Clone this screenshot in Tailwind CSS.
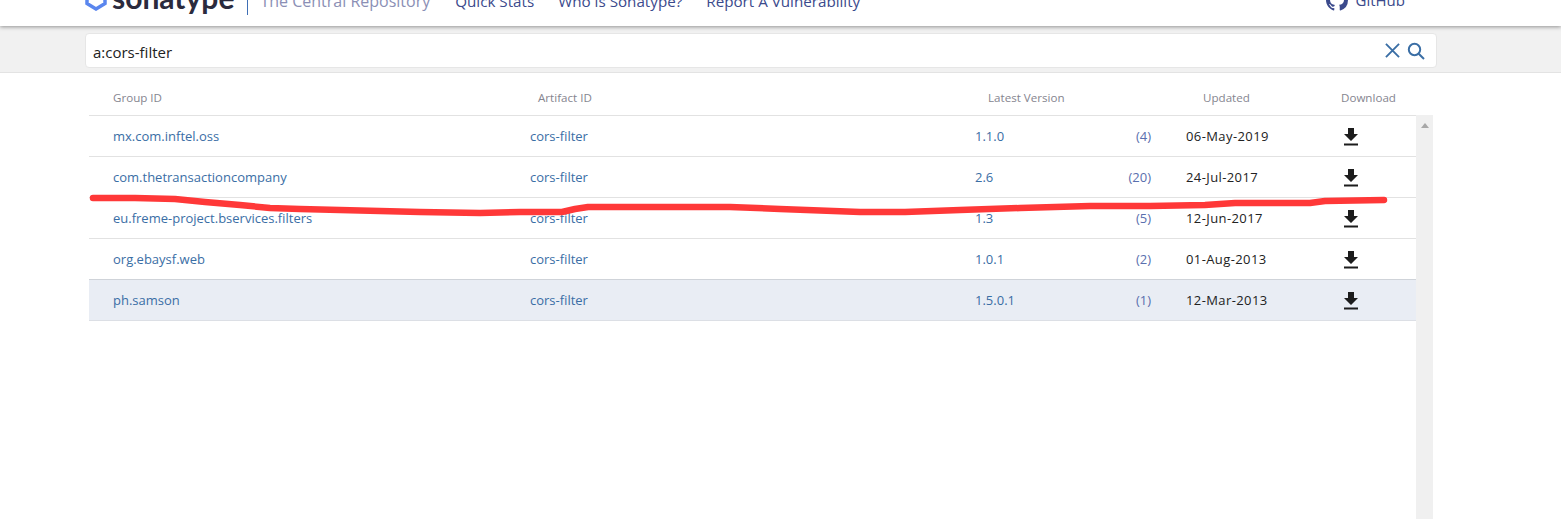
<!DOCTYPE html>
<html lang="en">
<head>
  <meta charset="UTF-8" />
  <title>The Central Repository</title>
  <script src="https://cdn.jsdelivr.net/npm/@tailwindcss/browser@4"></script>
</head>
<body class="relative h-[519px] overflow-hidden bg-white font-['Open_Sans',sans-serif] text-[13px]">

  <!-- header, scrolled partly out of view -->
  <header class="relative z-10 h-[26px] overflow-hidden bg-white shadow-[0_1px_4px_rgba(0,0,0,0.4)]">
    <div class="flex h-[26px] items-end pl-[85px] pr-[156px]">
      <svg class="mb-[15px] h-[26px] w-[22px] shrink-0" viewBox="0 0 22 26">
        <path d="M11 2 L20 7.5 V18.5 L11 24 L2 18.5 V7.5 Z" fill="none" stroke="#5a86ee" stroke-width="3.5" />
      </svg>
      <span class="mb-[14px] ml-[5px] text-[30px] leading-[30px] font-bold text-[#2b2b3d] font-['Lato',sans-serif]">sonatype</span>
      <span class="mb-[11px] ml-[13px] h-[30px] w-px shrink-0 bg-[#3f6fb5]"></span>
      <span class="mb-[15px] ml-[12px] text-[16px] leading-[20px] text-[#8b8fb5]">The Central Repository</span>
      <nav class="mb-[15px] ml-[25px] flex gap-[24px] text-[15.2px] leading-[20px] text-[#3b4a8c]">
        <span>Quick Stats</span>
        <span>Who is Sonatype?</span>
        <span>Report A Vulnerability</span>
      </nav>
      <div class="mb-[15px] ml-auto flex items-center gap-[8px] text-[15px] leading-[20px] text-[#3b4a8c]">
        <svg class="h-[22px] w-[22px]" viewBox="0 0 16 16" fill="#3b4a8c">
          <path d="M8 0C3.58 0 0 3.58 0 8c0 3.54 2.29 6.53 5.47 7.59.4.07.55-.17.55-.38v-1.34c-2.23.48-2.7-1.07-2.7-1.07-.36-.92-.89-1.17-.89-1.17-.73-.5.05-.49.05-.49.8.06 1.23.83 1.23.83.71 1.22 1.87.87 2.33.66.07-.52.28-.87.51-1.07-1.78-.2-3.64-.89-3.64-3.95 0-.87.31-1.59.82-2.15-.08-.2-.36-1.02.08-2.12 0 0 .67-.21 2.2.82A7.7 7.7 0 0 1 8 3.87c.68 0 1.36.09 2 .27 1.53-1.04 2.2-.82 2.2-.82.44 1.1.16 1.92.08 2.12.51.56.82 1.27.82 2.15 0 3.07-1.87 3.75-3.65 3.95.29.25.54.73.54 1.48v2.19c0 .21.15.46.55.38A8 8 0 0 0 16 8c0-4.42-3.58-8-8-8z" />
        </svg>
        <span>GitHub</span>
      </div>
    </div>
  </header>

  <!-- search band -->
  <div class="h-[47px] border-b border-[#e3e3e3] bg-[#f1f1f1] pt-[7px] pl-[85px]">
    <div class="flex h-[35px] w-[1352px] items-center rounded-[4px] border border-[#e6e6e6] bg-white pr-[11px] pl-[7px]">
      <span class="mt-[4px] text-[15px] text-[#222]">a:cors-filter</span>
      <svg class="ml-auto h-[15px] w-[15px]" viewBox="0 0 16 16" fill="none" stroke="#3a6ea5" stroke-width="2">
        <path d="M1 1 L15 15 M15 1 L1 15" />
      </svg>
      <svg class="ml-[7px] h-[18px] w-[18px]" viewBox="0 0 18 18" fill="none" stroke="#3a6ea5" stroke-width="2">
        <circle cx="7.5" cy="7.5" r="5.7" />
        <path d="M11.7 11.7 L17 17" />
      </svg>
    </div>
  </div>

  <!-- results table -->
  <main class="ml-[89px] flex w-[1344px]">
    <div class="w-[1327px]">
      <div class="grid h-[43px] grid-cols-[425px_450px_215px_138px_1fr] items-center border-b border-[#e2e2e2] pt-[8px] pl-[24px] text-[11.6px] text-[#85858f]">
        <span>Group ID</span>
        <span>Artifact ID</span>
        <span>Latest Version</span>
        <span>Updated</span>
        <span>Download</span>
      </div>

      <div class="grid h-[41px] grid-cols-[417px_445px_141px_35px_175px_1fr] items-center border-b border-[#e2e2e2] pt-[2px] pl-[24px]">
        <span class="text-[#3a6ea5]">mx.com.inftel.oss</span>
        <span class="text-[#3a6ea5]">cors-filter</span>
        <span class="text-[#3a6ea5]">1.1.0</span>
        <span class="text-right text-[#5a6fae]">(4)</span>
        <span class="ml-[35px] tracking-[0.4px] text-[#222]">06-May-2019</span>
        <svg class="ml-[17px] h-[18px] w-[16px]" viewBox="0 0 16 18" fill="#1c1c1c"><path d="M5 0 H11 V6 H15 L8 13 L1 6 H5 Z M1 15.5 H15 V17.5 H1 Z" /></svg>
      </div>
      <div class="grid h-[41px] grid-cols-[417px_445px_141px_35px_175px_1fr] items-center border-b border-[#e2e2e2] pt-[2px] pl-[24px]">
        <span class="text-[#3a6ea5]">com.thetransactioncompany</span>
        <span class="text-[#3a6ea5]">cors-filter</span>
        <span class="text-[#3a6ea5]">2.6</span>
        <span class="text-right text-[#5a6fae]">(20)</span>
        <span class="ml-[35px] tracking-[0.4px] text-[#222]">24-Jul-2017</span>
        <svg class="ml-[17px] h-[18px] w-[16px]" viewBox="0 0 16 18" fill="#1c1c1c"><path d="M5 0 H11 V6 H15 L8 13 L1 6 H5 Z M1 15.5 H15 V17.5 H1 Z" /></svg>
      </div>
      <div class="grid h-[41px] grid-cols-[417px_445px_141px_35px_175px_1fr] items-center border-b border-[#e2e2e2] pt-[2px] pl-[24px]">
        <span class="text-[#3a6ea5]">eu.freme-project.bservices.filters</span>
        <span class="text-[#3a6ea5]">cors-filter</span>
        <span class="text-[#3a6ea5]">1.3</span>
        <span class="text-right text-[#5a6fae]">(5)</span>
        <span class="ml-[35px] tracking-[0.4px] text-[#222]">12-Jun-2017</span>
        <svg class="ml-[17px] h-[18px] w-[16px]" viewBox="0 0 16 18" fill="#1c1c1c"><path d="M5 0 H11 V6 H15 L8 13 L1 6 H5 Z M1 15.5 H15 V17.5 H1 Z" /></svg>
      </div>
      <div class="grid h-[41px] grid-cols-[417px_445px_141px_35px_175px_1fr] items-center border-b border-[#cfd3d9] pt-[2px] pl-[24px]">
        <span class="text-[#3a6ea5]">org.ebaysf.web</span>
        <span class="text-[#3a6ea5]">cors-filter</span>
        <span class="text-[#3a6ea5]">1.0.1</span>
        <span class="text-right text-[#5a6fae]">(2)</span>
        <span class="ml-[35px] tracking-[0.4px] text-[#222]">01-Aug-2013</span>
        <svg class="ml-[17px] h-[18px] w-[16px]" viewBox="0 0 16 18" fill="#1c1c1c"><path d="M5 0 H11 V6 H15 L8 13 L1 6 H5 Z M1 15.5 H15 V17.5 H1 Z" /></svg>
      </div>
      <div class="grid h-[41px] grid-cols-[417px_445px_141px_35px_175px_1fr] items-center border-b border-[#dcdfe5] bg-[#e9edf4] pt-[2px] pl-[24px]">
        <span class="text-[#3a6ea5]">ph.samson</span>
        <span class="text-[#3a6ea5]">cors-filter</span>
        <span class="text-[#3a6ea5]">1.5.0.1</span>
        <span class="text-right text-[#5a6fae]">(1)</span>
        <span class="ml-[35px] tracking-[0.4px] text-[#222]">12-Mar-2013</span>
        <svg class="ml-[17px] h-[18px] w-[16px]" viewBox="0 0 16 18" fill="#1c1c1c"><path d="M5 0 H11 V6 H15 L8 13 L1 6 H5 Z M1 15.5 H15 V17.5 H1 Z" /></svg>
      </div>
    </div>

    <!-- scrollbar -->
    <div class="mt-[42px] h-[404px] w-[17px] bg-[#f0f0f0] pt-[8px]">
      <div class="mx-auto h-0 w-0 border-x-[4px] border-b-[5px] border-x-transparent border-b-[#a8a8a8]"></div>
    </div>
  </main>

  <!-- red marker stroke drawn over the screenshot -->
  <svg class="absolute top-0 left-0 z-20 h-[519px] w-[1561px]" viewBox="0 0 1561 519" fill="none">
    <path d="M93 198 L135 198 L175 199 L205 202 L240 205 L270 208 L300 209 L340 210 L380 211 L420 212 L480 213 L520 212 L562 212 L575 209 L588 207 L670 207 L730 207 L780 209 L860 212 L905 212 L960 210 L1020 208 L1090 206 L1150 206 L1205 205 L1235 203 L1310 203 L1325 201 L1384 200" stroke="#ff3838" stroke-width="6.5" stroke-linecap="round" stroke-linejoin="round" />
  </svg>
</body>
</html>
